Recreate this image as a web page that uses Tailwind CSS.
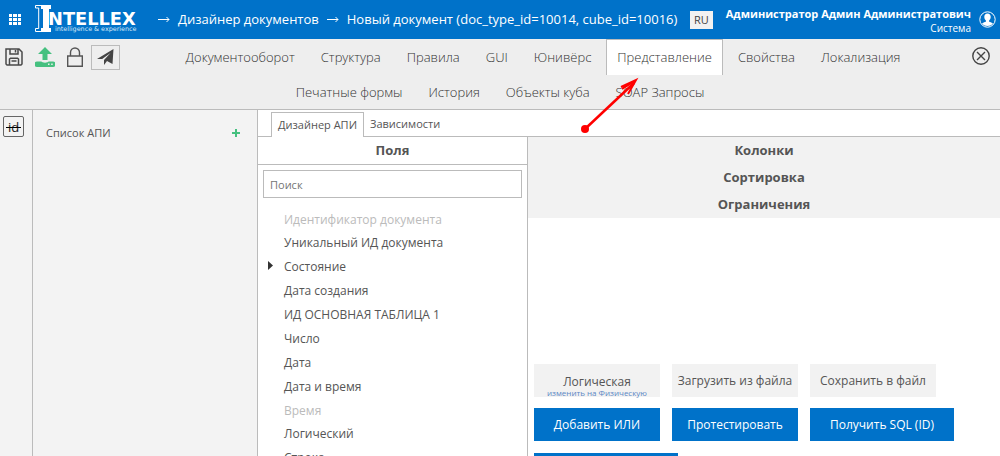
<!DOCTYPE html>
<html lang="ru">
<head>
<meta charset="utf-8">
<meta name="viewport" content="width=device-width, initial-scale=1">
<title>Intellex — Дизайнер документов</title>
<script src="https://cdn.jsdelivr.net/npm/@tailwindcss/browser@4"></script>
</head>
<body class="relative flex h-screen flex-col overflow-hidden bg-white font-['Open_Sans',sans-serif] text-[13px] text-[#555]">

<header class="flex h-[39px] shrink-0 items-center bg-[#0072c9] text-white">
  <button type="button" aria-label="Меню" class="ml-[9px] shrink-0">
    <svg class="block h-[11px] w-3" viewBox="0 0 12 11" fill="#fff" shape-rendering="crispEdges"><path d="M0 0h3v3H0zM4 0h4v3H4zM9 0h3v3H9zM0 4h3v3H0zM4 4h4v3H4zM9 4h3v3H9zM0 8h3v3H0zM4 8h4v3H4zM9 8h3v3H9z"/></svg>
  </button>
  <a href="#" aria-label="Intellex" class="ml-[14px] shrink-0">
    <svg class="block h-[39px] w-[104px]" viewBox="35 0 104 39" fill="#fff">
      <path d="M41.500 5.500H35.500V8H38.700V28.500H35.500V31.500H41.500" fill="none" stroke="#fff" stroke-width="1"/>
      <path d="M41 5H51V9H49V28H51V32H41V28H43V9H41z"/>
      <text x="48" y="24.500" font-family="DejaVu Sans" font-weight="700" font-size="17.800">NTELLEX</text>
      <text x="55" y="31" font-family="DejaVu Sans" font-size="6.400" fill="#d5e8f7">intelligence &amp; experience</text>
    </svg>
  </a>
  <nav aria-label="Путь" class="ml-[19px] flex grow items-center gap-2 whitespace-nowrap text-[13px]">
    <svg class="h-[7px] w-3" viewBox="0 0 12 7" fill="none" stroke="#fff"><path d="M0 3.500H11M8.500 1L11 3.500L8.500 6"/></svg>
    <a href="#">Дизайнер документов</a>
    <svg class="h-[7px] w-3" viewBox="0 0 12 7" fill="none" stroke="#fff"><path d="M0 3.500H11M8.500 1L11 3.500L8.500 6"/></svg>
    <a href="#">Новый документ (doc_type_id=10014, cube_id=10016)</a>
  </nav>
  <button type="button" class="h-[18px] w-[23px] shrink-0 bg-[#f2f2f2] text-[11px] leading-[18px] text-[#444]">RU</button>
  <div class="ml-[13px] shrink-0 whitespace-nowrap text-right">
    <div class="text-[11px] leading-4 font-bold">Администратор Админ Администратович</div>
    <div class="text-[10px] leading-3">Система</div>
  </div>
  <button type="button" aria-label="Профиль" class="mr-1 ml-2 shrink-0">
    <svg class="block size-[17px]" viewBox="0 0 17 17"><circle cx="8.500" cy="8.500" r="7.700" fill="none" stroke="#fff"/><path fill="#fff" d="M8.500 2.500c-2 0-3.200 1.300-3.200 3.300 0 1.600.7 2.900 1.600 3.700v1.300c-1.300.5-3 .9-3.900 1.900a7.500 7.500 0 0 0 11 0c-.9-1-2.600-1.400-3.900-1.900V9.500c.9-.8 1.600-2.100 1.600-3.700 0-2-1.200-3.300-3.200-3.300z"/></svg>
  </button>
</header>

<div class="shrink-0 border-b border-[#bbb] bg-[#eee]">
  <div class="flex h-9">
    <div class="flex w-[120px] shrink-0 items-center">
      <button type="button" aria-label="Сохранить" class="ml-[5px]">
        <svg class="block size-[18px]" viewBox="0 0 18 18" fill="none" stroke="#4a4a4a" stroke-width="1.500"><path d="M1 1H14L17 4V16L16 17H2L1 16zM5 1V6H13V1M10.500 2V4.500M4.500 17V11L5.500 10.200H12.500L13.500 11V17M6.500 13H11.500"/></svg>
      </button>
      <button type="button" aria-label="Загрузить" class="ml-3">
        <svg class="block size-5" viewBox="0 0 20 20" fill="#45c07f"><path d="M10 0L17 7H12.500V13H7.500V7H3z"/><path fill-rule="evenodd" d="M2 14.500H6.500C7 16 13 16 13.500 14.500H18a2.500 2.500 0 0 1 0 5.500H2a2.500 2.500 0 0 1 0-5.500zM13 16.500v1.500h1.500v-1.500zM16.200 16.500v1.500h1.500v-1.500z"/></svg>
      </button>
      <button type="button" aria-label="Заблокировать" class="ml-3">
        <svg class="block h-5 w-4" viewBox="0 0 16 20" fill="none" stroke="#555" stroke-width="1.400"><path d="M.7 9H15.300V19.200H.7zM3.500 9V5.500a4.500 4.500 0 0 1 9 0V9"/></svg>
      </button>
      <button type="button" aria-label="Отправить" class="ml-2 flex h-[25px] w-[29px] items-center justify-center border border-[#bbb]">
        <svg class="h-4 w-[17px]" viewBox="0 0 17 16" fill="#444"><path d="M16.500 0L0 10H5.200L13.500 4L7 11V16L10 12L15.500 15z"/></svg>
      </button>
    </div>
    <nav aria-label="Разделы" class="flex grow justify-center gap-1 text-[13px] leading-[35px] font-light text-[#333] whitespace-nowrap">
      <a href="#" class="border border-b-0 border-transparent px-[10px]">Документооборот</a>
      <a href="#" class="border border-b-0 border-transparent px-[10px]">Структура</a>
      <a href="#" class="border border-b-0 border-transparent px-[10px]">Правила</a>
      <a href="#" class="border border-b-0 border-transparent px-[10px]">GUI</a>
      <a href="#" class="border border-b-0 border-transparent px-[10px]">Юнивёрс</a>
      <a href="#" aria-current="page" class="border border-b-0 border-[#bbb] bg-white px-[10px]">Представление</a>
      <a href="#" class="border border-b-0 border-transparent px-[10px]">Свойства</a>
      <a href="#" class="border border-b-0 border-transparent px-[10px]">Локализация</a>
    </nav>
    <div class="flex w-[34px] shrink-0 justify-end pt-2 pr-[10px]">
      <button type="button" aria-label="Закрыть" class="size-[18px]">
        <svg class="block size-[18px]" viewBox="0 0 18 18" fill="none" stroke="#444" stroke-width="1.400"><circle cx="9" cy="9" r="8.200"/><path d="M5 5L13 13M13 5L5 13"/></svg>
      </button>
    </div>
  </div>
  <nav aria-label="Дополнительные разделы" class="flex h-[34px] justify-center gap-1 text-[13px] leading-[35px] font-light text-[#333] whitespace-nowrap">
    <a href="#" class="px-[11px]">Печатные формы</a>
    <a href="#" class="px-[11px]">История</a>
    <a href="#" class="px-[11px]">Объекты куба</a>
    <a href="#" class="px-[11px]">SOAP Запросы</a>
  </nav>
</div>

<main class="flex min-h-0 grow">
  <div class="w-[33px] shrink-0 border-r border-[#bbb] bg-[#f3f3f3] pt-[6px] pl-[3px]">
    <button type="button" class="flex size-[21px] items-center justify-center rounded-xs border border-[#666]" aria-label="id">
      <span class="relative text-[13px] leading-[18px] text-[#222]">id<span class="absolute top-[9px] -right-[2px] -left-[2px] h-px bg-black"></span></span>
    </button>
  </div>
  <aside class="w-[225px] shrink-0 border-r border-[#bbb] bg-[#f3f3f3]">
    <div class="flex items-center justify-between pt-[14px] pr-[17px] pl-[13px]">
      <h2 class="text-[11px] leading-[18px]">Список АПИ</h2>
      <button type="button" aria-label="Добавить АПИ">
        <svg class="block size-2" viewBox="0 0 8 8" fill="#45c07f"><path d="M3 0H5V3H8V5H5V8H3V5H0V3H3z"/></svg>
      </button>
    </div>
  </aside>
  <section class="flex min-w-0 grow flex-col">
    <div role="tablist" class="flex h-[27px] shrink-0 pt-[2px] text-[11px]">
      <div class="w-[13px] border-b border-[#bbb]"></div>
      <button type="button" role="tab" aria-selected="true" class="border border-b-0 border-[#bbb] px-[6px] leading-5">Дизайнер АПИ</button>
      <button type="button" role="tab" aria-selected="false" class="grow border-b border-[#bbb] px-[6px] text-left leading-5">Зависимости</button>
    </div>
    <div class="flex min-h-0 grow">
      <div class="w-[270px] shrink-0 overflow-hidden border-r border-[#bbb]">
        <h2 class="h-7 border-b border-[#bbb] text-center text-[13px] leading-[27px] font-bold">Поля</h2>
        <div class="px-[5px] pt-[5px]">
          <input type="search" aria-label="Поиск" placeholder="Поиск" class="block h-7 w-full border border-[#bbb] px-[6px] text-[11px] placeholder:text-[#757575]">
        </div>
        <ul class="pt-[10px] pl-[26px] text-xs leading-6">
          <li class="leading-[23px] text-[#bbb]">Идентификатор документа</li>
          <li>Уникальный ИД документа</li>
          <li class="relative"><svg class="absolute top-[6px] -left-4 h-[9px] w-[5px]" viewBox="0 0 5 9" fill="#333"><path d="M0 0L5 4.500L0 9z"/></svg>Состояние</li>
          <li>Дата создания</li>
          <li>ИД ОСНОВНАЯ ТАБЛИЦА 1</li>
          <li>Число</li>
          <li>Дата</li>
          <li>Дата и время</li>
          <li class="leading-[23px] text-[#bbb]">Время</li>
          <li>Логический</li>
          <li>Строка</li>
        </ul>
      </div>
      <div class="flex min-w-0 grow flex-col overflow-hidden">
        <div class="bg-[#f2f2f2] text-center text-[13px] leading-[27px] font-bold">
          <h2>Колонки</h2>
          <h2>Сортировка</h2>
          <h2>Ограничения</h2>
        </div>
        <div class="mt-[146px] flex flex-col gap-[11px] pl-[6px] text-xs whitespace-nowrap">
          <div class="flex gap-3">
            <button type="button" class="h-[33px] w-[126px] bg-[#f2f2f2] pt-[9px]"><span class="block leading-4">Логическая</span><span class="block text-[8px] leading-[6px] text-[#5b87c5]">изменить на Физическую</span></button>
            <button type="button" class="h-[33px] w-[126px] bg-[#f2f2f2]">Загрузить из файла</button>
            <button type="button" class="h-[33px] w-[126px] bg-[#f2f2f2]">Сохранить в файл</button>
          </div>
          <div class="flex gap-3 text-white">
            <button type="button" class="h-[33px] w-[126px] bg-[#0072c9]">Добавить ИЛИ</button>
            <button type="button" class="h-[33px] w-[126px] bg-[#0072c9]">Протестировать</button>
            <button type="button" class="h-[33px] w-36 bg-[#0072c9]">Получить SQL (ID)</button>
          </div>
          <button type="button" aria-label="Действие" class="mt-px h-[33px] w-36 bg-[#0072c9]"></button>
        </div>
      </div>
    </div>
  </section>
</main>

<svg class="pointer-events-none absolute top-[76px] left-[580px] h-[58px] w-[60px]" viewBox="580 76 60 58" fill="none" stroke="#f00" stroke-width="2.500" aria-hidden="true">
  <circle cx="585" cy="129" r="4" fill="#f00" stroke="none"/>
  <path d="M585 129L634 83"/>
  <path d="M621 87L636 80L628 94M622 89L635 81" stroke-width="2"/>
</svg>
</body>
</html>
